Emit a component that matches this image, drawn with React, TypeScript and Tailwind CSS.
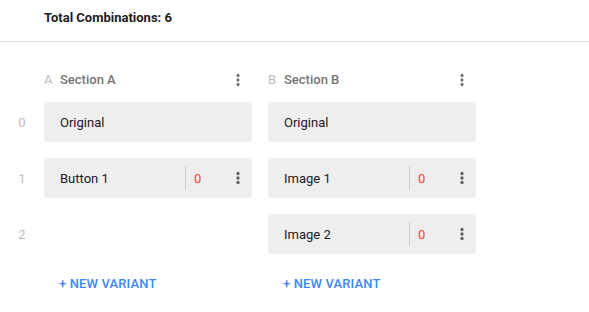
import React from "react";

function Kebab({ color = "#616161" }: { color?: string }) {
  return (
    <svg width="18" height="18" viewBox="0 0 24 24" fill={color}>
      <circle cx="12" cy="6" r="2.2" />
      <circle cx="12" cy="12" r="2.2" />
      <circle cx="12" cy="18" r="2.2" />
    </svg>
  );
}

function Card({ name, variant }: { name: string; variant?: boolean }) {
  return (
    <div className="flex h-[40px] w-[208px] items-center rounded-[4px] bg-[#eeeeee]">
      <span className="flex-1 pl-[16px] pt-px text-[13px] text-[#212121]">{name}</span>
      {variant && (
        <>
          <div className="h-[24px] w-px bg-[#cfcfcf]" />
          <span className="w-[43px] pl-[8px] pt-px text-[13px] text-[#f44336]">0</span>
          <div className="mr-[5px] flex items-center">
            <Kebab />
          </div>
        </>
      )}
    </div>
  );
}

function Header({ letter, title }: { letter: string; title: string }) {
  return (
    <div className="flex h-[24px] w-[208px] items-center">
      <span className="w-[16px] text-[13px] text-[#bdbdbd]">{letter}</span>
      <span className="flex-1 text-[13px] font-medium text-[#757575]">{title}</span>
      <div className="mr-[5px] flex items-center">
        <Kebab color="#757575" />
      </div>
    </div>
  );
}

function RowLabel({ n }: { n: string }) {
  return (
    <div className="flex w-[44px] items-center justify-center pt-px text-[13px] text-[#bdbdbd]">{n}</div>
  );
}

function AddBtn() {
  return (
    <div className="flex h-[36px] w-[208px] items-center pl-[15px] text-[13px] font-medium tracking-[0.01em] text-[#4285f4]">
      + NEW VARIANT
    </div>
  );
}

export default function App() {
  return (
    <div
      className="h-[312px] w-[589px] bg-white"
      style={{ fontFamily: "Roboto, 'Noto Sans', sans-serif" }}
    >
      <div className="h-[42px] border-b border-[#e0e0e0] pl-[44px] pt-[10px]">
        <div className="text-[13px] leading-[15px] font-bold text-[#212121]">Total Combinations: 6</div>
      </div>
      <div className="pt-[26px]">
        <div className="flex">
          <div className="w-[44px]" />
          <div className="flex gap-[16px]">
            <Header letter="A" title="Section A" />
            <Header letter="B" title="Section B" />
          </div>
        </div>
        <div className="mt-[10px] flex flex-col gap-[16px]">
          <div className="flex">
            <RowLabel n="0" />
            <div className="flex gap-[16px]">
              <Card name="Original" />
              <Card name="Original" />
            </div>
          </div>
          <div className="flex">
            <RowLabel n="1" />
            <div className="flex gap-[16px]">
              <Card name="Button 1" variant />
              <Card name="Image 1" variant />
            </div>
          </div>
          <div className="flex">
            <RowLabel n="2" />
            <div className="flex gap-[16px]">
              <div className="h-[40px] w-[208px]" />
              <Card name="Image 2" variant />
            </div>
          </div>
        </div>
        <div className="mt-[12px] flex">
          <div className="w-[44px]" />
          <div className="flex gap-[16px]">
            <AddBtn />
            <AddBtn />
          </div>
        </div>
      </div>
    </div>
  );
}
